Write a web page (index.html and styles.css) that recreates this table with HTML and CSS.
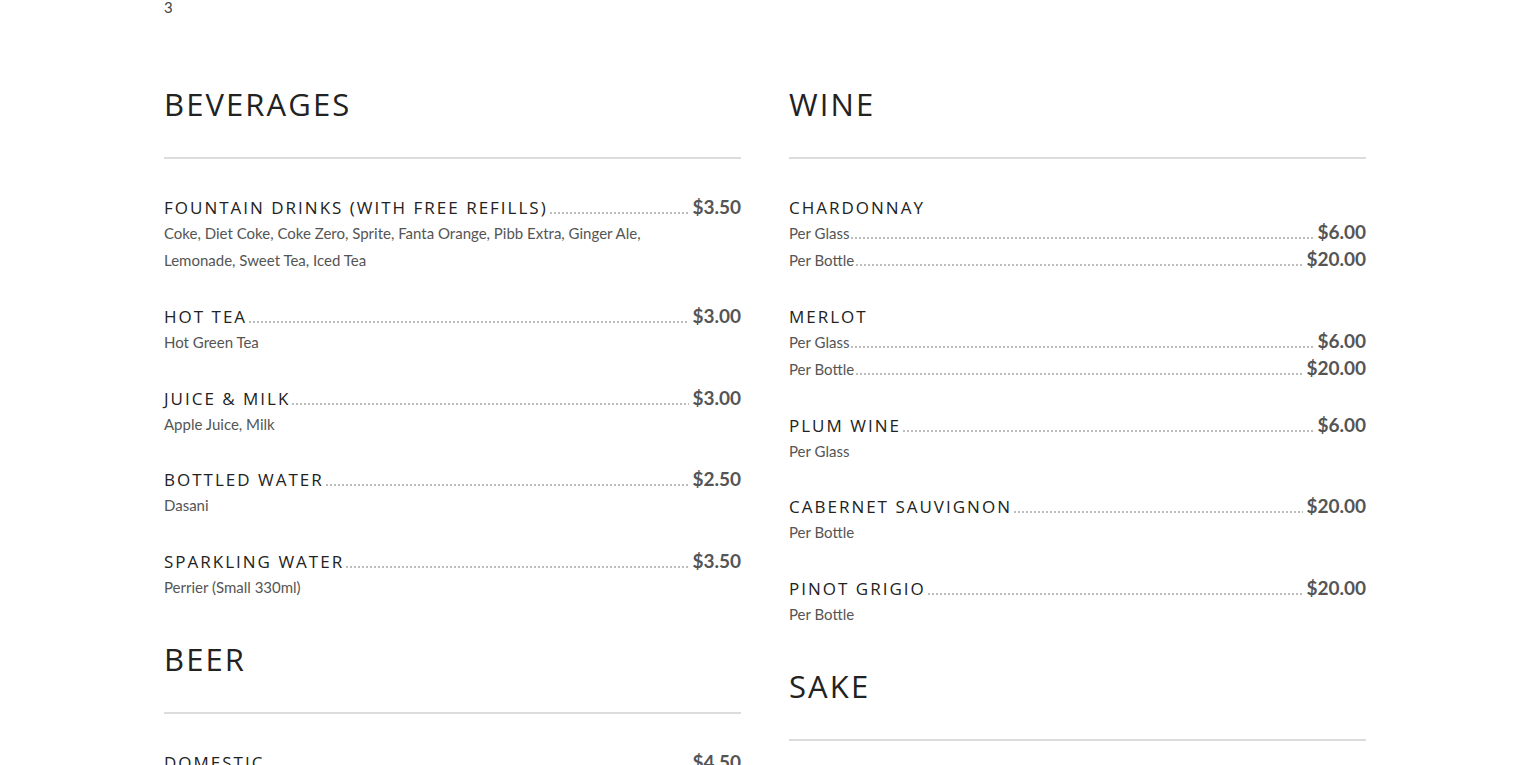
FILE: index.html
```html
<!DOCTYPE html>
<html lang="en">
<head>
<meta charset="utf-8">
<title>Menu</title>
<link rel="stylesheet" href="styles.css">
</head>
<body>
<div class="page">
  <div class="topnote">3</div>
  <div class="columns">
    <div class="column">
      <section class="section">
        <h2 class="section-title">Beverages</h2>
        <hr class="rule">
        <div class="items">
          <div class="item">
            <div class="row"><span class="name">Fountain Drinks (with free refills)</span><span class="leader"></span><span class="price">$3.50</span></div>
            <p class="desc">Coke, Diet Coke, Coke Zero, Sprite, Fanta Orange, Pibb Extra, Ginger Ale, Lemonade, Sweet Tea, Iced Tea</p>
          </div>
          <div class="item">
            <div class="row"><span class="name">Hot Tea</span><span class="leader"></span><span class="price">$3.00</span></div>
            <p class="desc">Hot Green Tea</p>
          </div>
          <div class="item">
            <div class="row"><span class="name">Juice &amp; Milk</span><span class="leader"></span><span class="price">$3.00</span></div>
            <p class="desc">Apple Juice, Milk</p>
          </div>
          <div class="item">
            <div class="row"><span class="name">Bottled Water</span><span class="leader"></span><span class="price">$2.50</span></div>
            <p class="desc">Dasani</p>
          </div>
          <div class="item">
            <div class="row"><span class="name">Sparkling Water</span><span class="leader"></span><span class="price">$3.50</span></div>
            <p class="desc">Perrier (Small 330ml)</p>
          </div>
        </div>
      </section>
      <section class="section">
        <h2 class="section-title">Beer</h2>
        <hr class="rule">
        <div class="items">
          <div class="item">
            <div class="row"><span class="name">Domestic</span><span class="leader"></span><span class="price">$4.50</span></div>
            <p class="desc">Budweiser, Bud Light, Miller Lite</p>
          </div>
        </div>
      </section>
    </div>
    <div class="column">
      <section class="section">
        <h2 class="section-title">Wine</h2>
        <hr class="rule">
        <div class="items">
          <div class="item">
            <div class="row"><span class="name">Chardonnay</span></div>
            <div class="subrow"><span class="desc-inline">Per Glass</span><span class="leader"></span><span class="price">$6.00</span></div>
            <div class="subrow"><span class="desc-inline">Per Bottle</span><span class="leader"></span><span class="price">$20.00</span></div>
          </div>
          <div class="item">
            <div class="row"><span class="name">Merlot</span></div>
            <div class="subrow"><span class="desc-inline">Per Glass</span><span class="leader"></span><span class="price">$6.00</span></div>
            <div class="subrow"><span class="desc-inline">Per Bottle</span><span class="leader"></span><span class="price">$20.00</span></div>
          </div>
          <div class="item">
            <div class="row"><span class="name">Plum Wine</span><span class="leader"></span><span class="price">$6.00</span></div>
            <p class="desc">Per Glass</p>
          </div>
          <div class="item">
            <div class="row"><span class="name">Cabernet Sauvignon</span><span class="leader"></span><span class="price">$20.00</span></div>
            <p class="desc">Per Bottle</p>
          </div>
          <div class="item">
            <div class="row"><span class="name">Pinot Grigio</span><span class="leader"></span><span class="price">$20.00</span></div>
            <p class="desc">Per Bottle</p>
          </div>
        </div>
      </section>
      <section class="section">
        <h2 class="section-title">Sake</h2>
        <hr class="rule">
        <div class="items">
          <div class="item">
            <div class="row"><span class="name">Hot Sake</span><span class="leader"></span><span class="price">$6.00</span></div>
            <p class="desc">Small</p>
          </div>
        </div>
      </section>
    </div>
  </div>
</div>
</body>
</html>
```

FILE: styles.css
```css
* { box-sizing: border-box; }
html, body { margin: 0; padding: 0; background: #fff; }
body {
  font-family: "Lato", "Liberation Sans", sans-serif;
  color: #555;
}
.page {
  width: 1202px;
  margin: 0 auto;
}
.topnote {
  font-size: 15px;
  line-height: 14px;
  color: #444;
  margin-bottom: 70px;
}
.columns {
  display: grid;
  grid-template-columns: 1fr 1fr;
  column-gap: 48px;
  align-items: start;
}
.section {
  margin-bottom: 38px;
}
.section-title {
  margin: 0;
  font-family: "Open Sans", "Noto Sans", sans-serif;
  font-weight: 400;
  font-size: 31px;
  line-height: 40px;
  letter-spacing: 2.1px;
  text-transform: uppercase;
  color: #222;
}
.rule {
  margin: 33px 0 37px;
  border: 0;
  height: 2px;
  background: #dcdcdc;
}
.items {
  display: flex;
  flex-direction: column;
  gap: 30.75px;
}
.row, .subrow {
  display: flex;
  align-items: baseline;
}
.row { line-height: 24px; height: 24px; }
.subrow { line-height: 27px; height: 27px; }
.name {
  font-family: "Open Sans", "Noto Sans", sans-serif;
  font-size: 17px;
  letter-spacing: 2px;
  text-transform: uppercase;
  color: #222;
  white-space: nowrap;
}
.leader {
  flex: 1;
  height: 2px;
  margin: 0 3px 0 2px;
  min-width: 10px;
  background-image: linear-gradient(to right, #bcbcbc 2px, transparent 2px);
  background-size: 4px 2px;
  background-repeat: repeat-x;
  background-position: left bottom;
}
.price {
  font-size: 19px;
  line-height: 20px;
  font-weight: 700;
  color: #555;
  white-space: nowrap;
}
.desc, .desc-inline {
  font-size: 15px;
  line-height: 27px;
  color: #555;
}
.desc {
  margin: 0;
  max-width: 490px;
}
.desc-inline { white-space: nowrap; }
```
